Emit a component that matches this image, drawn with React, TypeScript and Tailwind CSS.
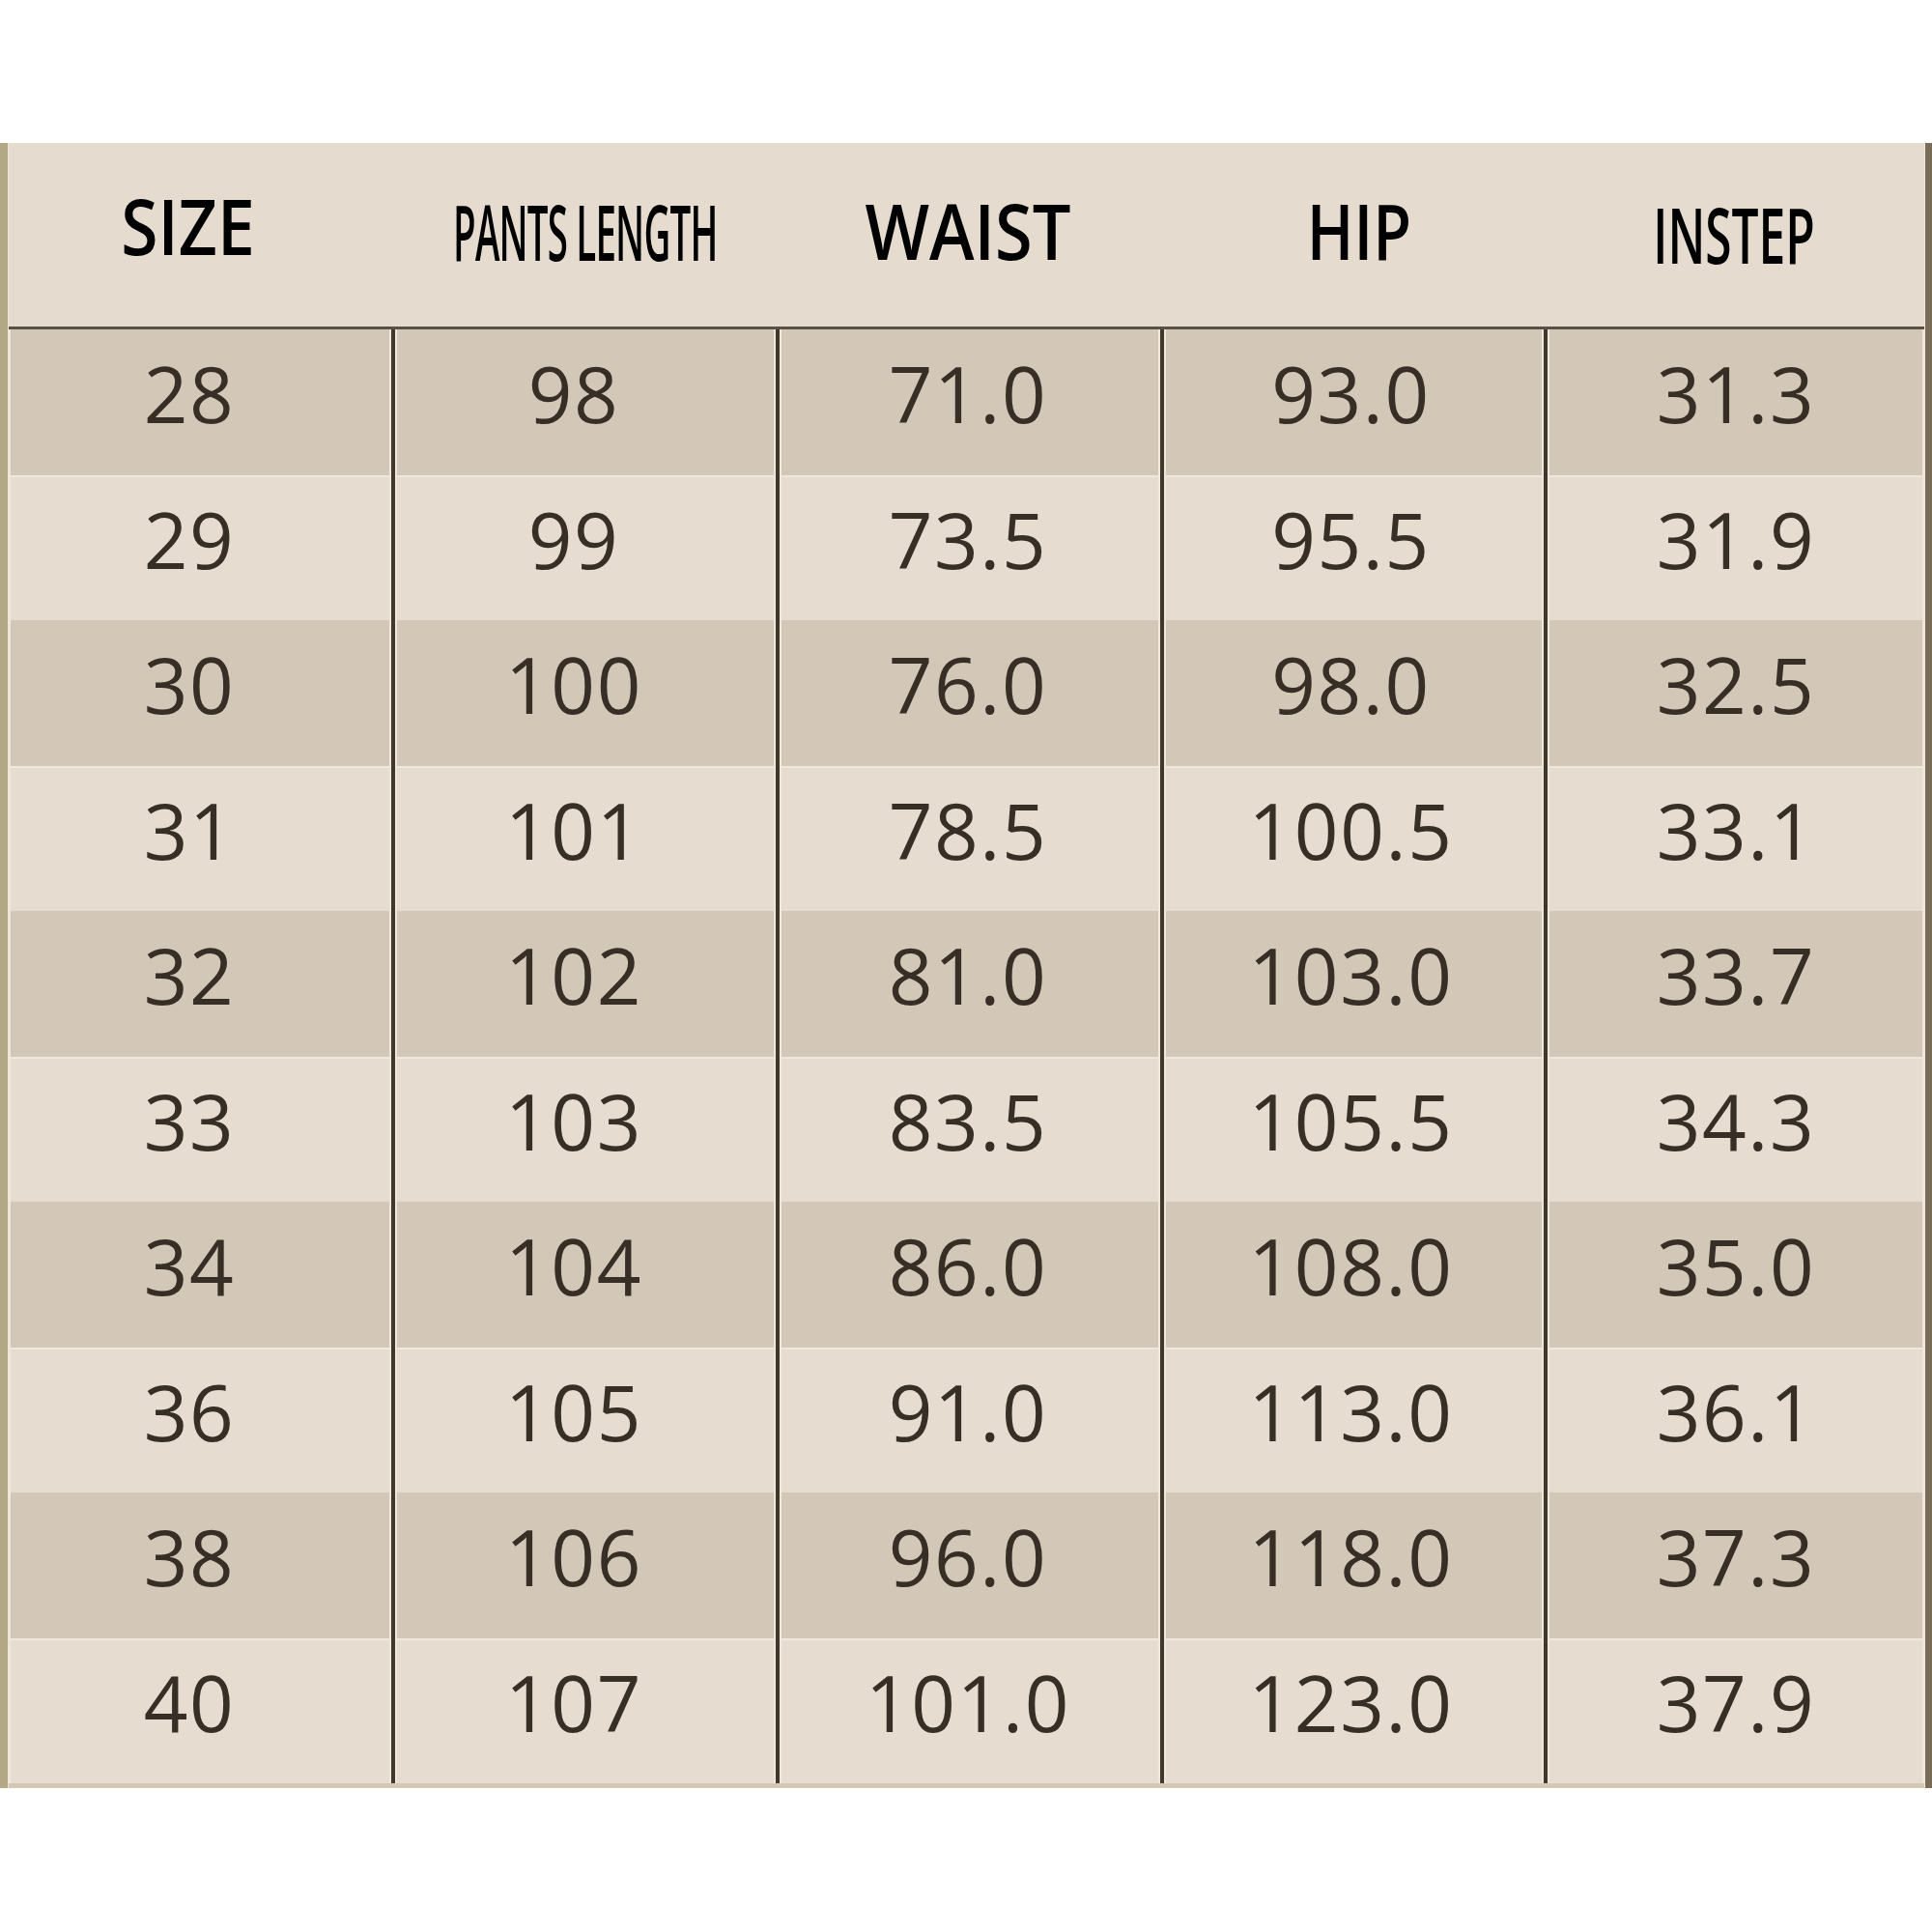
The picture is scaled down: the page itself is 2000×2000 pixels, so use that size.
import React from "react";

const rows: string[][] = [
  ["28", "98", "71.0", "93.0", "31.3"],
  ["29", "99", "73.5", "95.5", "31.9"],
  ["30", "100", "76.0", "98.0", "32.5"],
  ["31", "101", "78.5", "100.5", "33.1"],
  ["32", "102", "81.0", "103.0", "33.7"],
  ["33", "103", "83.5", "105.5", "34.3"],
  ["34", "104", "86.0", "108.0", "35.0"],
  ["36", "105", "91.0", "113.0", "36.1"],
  ["38", "106", "96.0", "118.0", "37.3"],
  ["40", "107", "101.0", "123.0", "37.9"],
];

const colW = ["w-[396px]", "w-[398px]", "w-[398px]", "w-[397px]", "w-[394px]"];
const bodyPad = ["pr-[22px]", "pr-[24px]", "pr-[4px]", "pr-[6px]", "pr-0"];

export default function App() {
  return (
    <div className="w-[2000px] h-[2000px] bg-white pt-[148px]">
      <div className="flex h-[1703px]">
        <div className="w-[9px] bg-[#b3a886] border-r border-[#ede5d6]" />
        <div className="flex-1 flex flex-col">
          {/* header */}
          <div
            className="h-[193px] flex bg-[#e5dccf] border-b-[3px] border-[#5a5144] text-black font-semibold text-[80px] leading-none"
            style={{ fontFamily: '"Open Sans", "Noto Sans", sans-serif' }}
          >
            <div className={`${colW[0]} flex items-center justify-center pr-[24px] pb-[20px]`}>
              <span className="inline-block scale-x-[0.87]">SIZE</span>
            </div>
            <div className={`${colW[1]} flex items-center justify-center pl-[4px] pb-[8px]`}>
              <span className="inline-block scale-x-[0.48] tracking-[-0.02em] whitespace-nowrap">PANTS LENGTH</span>
            </div>
            <div className={`${colW[2]} flex items-center justify-center pb-[10px]`}>
              <span className="inline-block scale-x-[0.88]">WAIST</span>
            </div>
            <div className={`${colW[3]} flex items-center justify-center pl-[14px] pb-[10px]`}>
              <span className="inline-block scale-x-[0.81]">HIP</span>
            </div>
            <div className={`${colW[4]} flex items-center justify-center pb-[2px]`}>
              <span className="inline-block scale-x-[0.62]">INSTEP</span>
            </div>
          </div>
          {/* body */}
          <div
            className="flex-1 flex flex-col border-b-[5px] border-[#d4c8b4] text-[80px] font-medium leading-none text-[#372e25] tracking-[0.02em]"
            style={{ fontFamily: '"Open Sans", "Noto Sans", sans-serif' }}
          >
            {rows.map((r, i) => (
              <div
                key={i}
                className={`flex-1 flex ${
                  i % 2 === 0
                    ? "bg-[#d3c7b7]"
                    : "bg-[#e6ddd0] shadow-[inset_0_2px_0_#efe8dc]"
                }`}
              >
                {r.map((v, j) => (
                  <div
                    key={j}
                    className={`${colW[j]} ${bodyPad[j]} flex items-center justify-center pb-[18px] ${
                      j > 0 ? "border-l-[4px] border-[#40372d]" : ""
                    } shadow-[inset_2px_0_0_#efe7da,inset_-2px_0_0_#efe7da]`}
                  >
                    {v}
                  </div>
                ))}
              </div>
            ))}
          </div>
        </div>
        <div className="w-[8px] bg-[#7a6d57] border-l border-[#efe7da]" />
      </div>
    </div>
  );
}
